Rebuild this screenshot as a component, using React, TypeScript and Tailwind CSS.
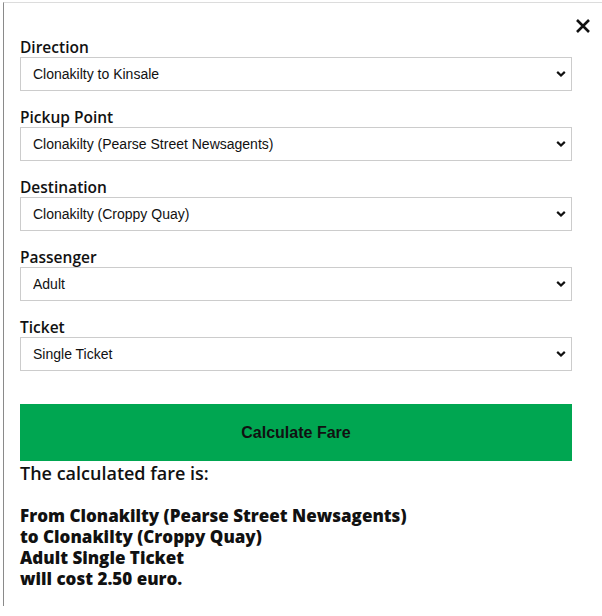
import React from "react";

const fields = [
  { label: "Direction", value: "Clonakilty to Kinsale" },
  { label: "Pickup Point", value: "Clonakilty (Pearse Street Newsagents)" },
  { label: "Destination", value: "Clonakilty (Croppy Quay)" },
  { label: "Passenger", value: "Adult" },
  { label: "Ticket", value: "Single Ticket" },
];

function Chevron() {
  return (
    <svg width="10" height="7" viewBox="0 0 10 7" className="pointer-events-none absolute right-[6px] top-1/2 -translate-y-1/2">
      <path d="M1.2 1.4 L5 5 L8.8 1.4" fill="none" stroke="#111" strokeWidth="2.2" />
    </svg>
  );
}

export default function App() {
  return (
    <div className="w-[602px] h-[616px] bg-white pt-[2px] pl-[3px] overflow-hidden">
      <div className="relative h-[604px] border-l border-t border-l-[#8a8a8a] border-t-[#dcdcdc] pl-[16px] pr-[30px] pt-[34px]">
        <button className="absolute right-[10px] top-[14px] w-[18px] h-[18px] flex items-center justify-center" aria-label="Close">
          <svg width="16" height="16" viewBox="0 0 16 16">
            <path d="M2 2 L14 14 M14 2 L2 14" stroke="#111" strokeWidth="2.6" />
          </svg>
        </button>

        <form className="flex flex-col">
          {fields.map((f) => (
            <div key={f.label} className="flex flex-col mb-[16px]">
              <label className="h-[20px] leading-[20px] text-[15.5px] font-semibold text-[#111] font-['Open_Sans','Noto_Sans',sans-serif]">
                {f.label}
              </label>
              <div className="relative">
                <select
                  defaultValue={f.value}
                  className="appearance-none w-full h-[34px] border border-[#cccccc] bg-white pl-[12px] text-[14px] text-[#111] font-['Liberation_Sans',Arial,sans-serif] outline-none"
                >
                  <option>{f.value}</option>
                </select>
                <Chevron />
              </div>
            </div>
          ))}

          <button
            type="button"
            className="mt-[17px] h-[57px] w-full bg-[#00a651] text-[16px] font-bold text-[#111] font-['Liberation_Sans',Arial,sans-serif]"
          >
            Calculate Fare
          </button>
        </form>

        <div className="font-['Open_Sans','Noto_Sans',sans-serif] text-[#111]">
          <p className="text-[18px] font-semibold leading-[24px]">The calculated fare is:</p>
          <p className="mt-[20px] text-[17px] font-extrabold leading-[21px]">
            From Clonakilty (Pearse Street Newsagents)
            <br />
            to Clonakilty (Croppy Quay)
            <br />
            Adult Single Ticket
            <br />
            will cost 2.50 euro.
          </p>
        </div>
      </div>
    </div>
  );
}
